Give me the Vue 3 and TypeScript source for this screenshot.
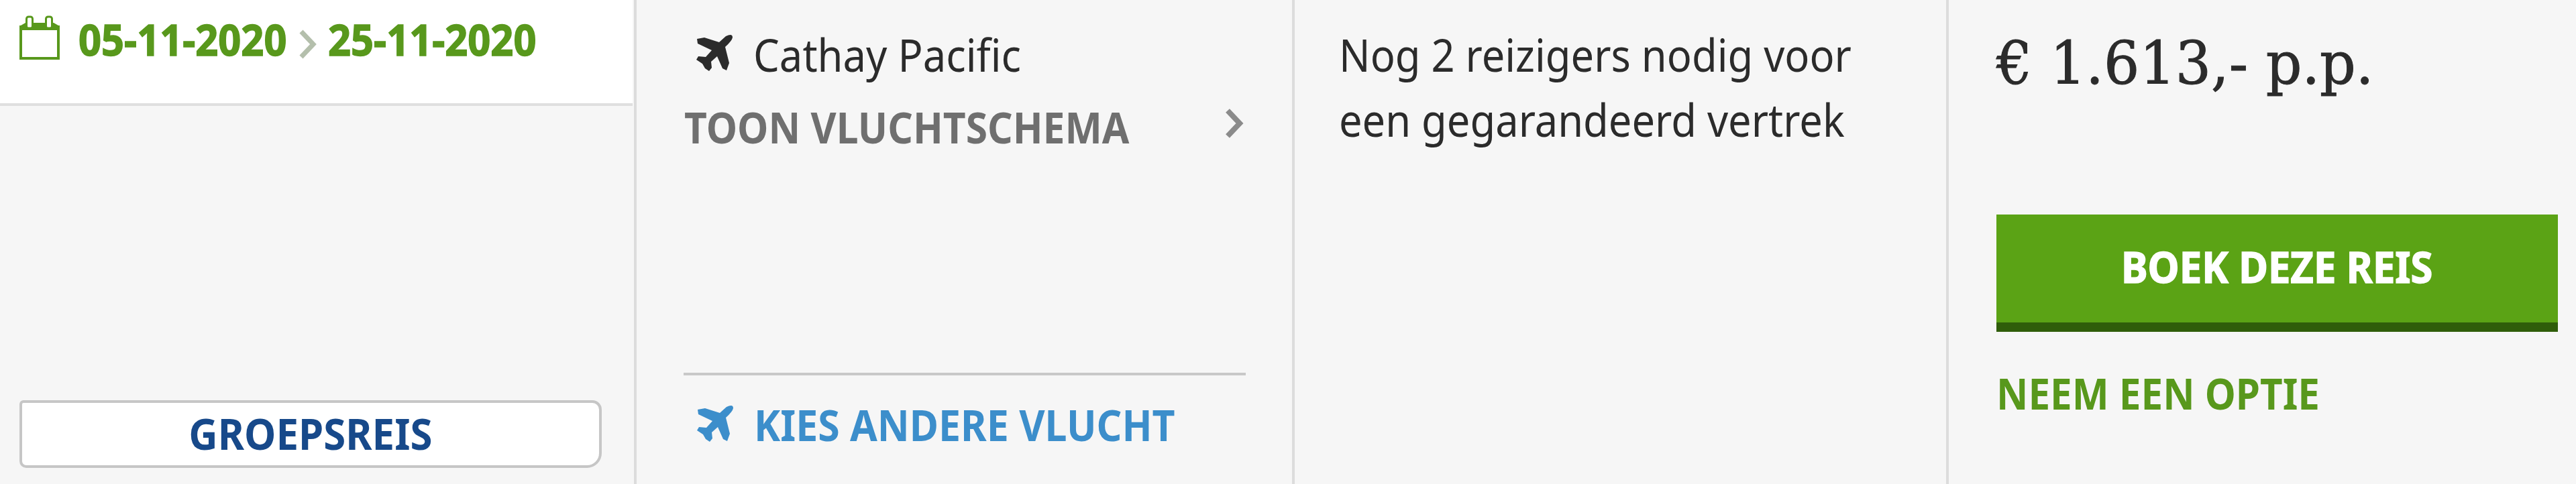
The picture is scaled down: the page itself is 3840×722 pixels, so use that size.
<script setup lang="ts">
const trip = {
  start: '05-11-2020',
  end: '25-11-2020',
  type: 'GROEPSREIS',
  airline: 'Cathay Pacific',
  price: '€ 1.613,- p.p.',
}
const planePath =
  'M1 6 L12 4 L34 11 L44 2 Q54 -3 54 4 Q53 9 43 18 L49 42 L45 53 L39 50 L31 32 L22 40 L23 49 L19 54 L13 50 L9 43 L0 37 L3 32 L14 33 L23 23 L2 13 Z'
</script>

<template>
  <main class="trip">
    <section class="col dates">
      <header class="period">
        <svg class="calendar" viewBox="0 0 60 66" aria-hidden="true">
          <path d="M2 22V15L9 11H51L58 15V22Z" fill="currentColor" />
          <path d="M2 15V64H58V15" fill="none" stroke="currentColor" stroke-width="4" />
          <rect x="10.5" y="2" width="9" height="17" rx="3" fill="#fff" stroke="currentColor" stroke-width="3" />
          <rect x="39.5" y="2" width="9" height="17" rx="3" fill="#fff" stroke="currentColor" stroke-width="3" />
        </svg>
        <time class="date">{{ trip.start }}</time>
        <svg class="until" viewBox="0 0 28 42" aria-hidden="true">
          <path d="M4 2L22 21L4 40" />
        </svg>
        <time class="date">{{ trip.end }}</time>
      </header>
      <div class="tag"><span class="fit">{{ trip.type }}</span></div>
    </section>

    <section class="col flight">
      <div class="airline">
        <svg class="plane" viewBox="0 0 54 55" aria-hidden="true"><path :d="planePath" /></svg>
        <span class="fit">{{ trip.airline }}</span>
      </div>
      <a class="schedule">
        <span class="fit">TOON VLUCHTSCHEMA</span>
        <svg class="more" viewBox="0 0 28 44" aria-hidden="true"><path d="M4 3L22 22L4 41" /></svg>
      </a>
      <a class="other">
        <svg class="plane" viewBox="0 0 54 55" aria-hidden="true"><path :d="planePath" /></svg>
        <span class="fit">KIES ANDERE VLUCHT</span>
      </a>
    </section>

    <section class="col status">
      <p class="notice">Nog 2 reizigers nodig voor<br />een gegarandeerd vertrek</p>
    </section>

    <section class="col booking">
      <div class="price">{{ trip.price }}</div>
      <button class="book" type="button"><span class="fit">BOEK DEZE REIS</span></button>
      <a class="option">NEEM EEN OPTIE</a>
    </section>
  </main>
</template>

<style>
body {
  background: #f6f6f6;
}
</style>

<style scoped>
.trip {
  display: grid;
  grid-template-columns: 949px 981px 975px 935px;
  width: 3840px;
  height: 722px;
  overflow: hidden;
  box-sizing: border-box;
  background: #f6f6f6;
  color: #2b2b2b;
  font-family: 'Noto Sans', 'Open Sans', sans-serif;
  font-size: 64px;
  white-space: nowrap;
}
.col {
  display: flex;
  flex-direction: column;
  box-sizing: border-box;
  min-width: 0;
  border-right: 4px solid #dcdcdc;
}
.fit,
.date {
  display: inline-block;
  transform-origin: 0 50%;
}
svg {
  display: block;
  flex: none;
  overflow: visible;
}

.dates {
  justify-content: space-between;
}
.period {
  display: flex;
  align-items: flex-start;
  box-sizing: border-box;
  width: 943px;
  height: 158px;
  padding-left: 29px;
  background: #fff;
  border-bottom: 4px solid #dfdfdf;
  color: #58981c;
  font-weight: 700;
  line-height: 117px;
}
.calendar {
  width: 60px;
  height: 66px;
  margin: 23px 28px 0 0;
}
.date {
  width: 328px;
  transform: scaleX(0.93);
  -webkit-text-stroke: 1.5px currentColor;
}
.until {
  width: 28px;
  height: 42px;
  margin: 45px 16px 0 0;
}
.until path {
  fill: none;
  stroke: #b4bfac;
  stroke-width: 7;
}
.tag {
  display: flex;
  justify-content: center;
  box-sizing: border-box;
  width: 868px;
  height: 101px;
  margin: 0 0 24px 29px;
  border: 4px solid #c6c6c6;
  border-radius: 6px 14px 22px 10px;
  background: #fff;
  color: #17498a;
  font-weight: 700;
  line-height: 91px;
}
.tag .fit {
  transform-origin: 50% 50%;
  transform: scaleX(0.937);
}

.flight {
  padding: 32px 69px 0 70px;
}
.airline,
.schedule,
.other {
  display: flex;
}
.airline {
  height: 98px;
  padding-left: 19px;
  font-size: 67px;
  line-height: 99px;
}
.plane {
  width: 54px;
  height: 55px;
  fill: currentColor;
}
.airline .plane {
  margin: 20px 31px 0 0;
}
.airline .fit {
  transform: scaleX(0.918);
}
.schedule {
  justify-content: space-between;
  height: 116px;
  padding-left: 1px;
  color: #6f6f6f;
  font-weight: 700;
  line-height: 119px;
}
.schedule .fit {
  transform: scaleX(0.917);
}
.more {
  width: 28px;
  height: 44px;
  margin: 32px 3px 0 0;
}
.more path {
  fill: none;
  stroke: #8b8b8b;
  stroke-width: 8;
}
.other {
  height: 144px;
  margin-top: auto;
  margin-bottom: 18px;
  padding-left: 20px;
  border-top: 4px solid #c8c8c8;
  color: #3c8ecb;
  font-weight: 700;
  line-height: 147px;
}
.other .plane {
  margin: 45px 31px 0 0;
}
.other .fit {
  transform: scaleX(0.922);
}

.status {
  padding: 33px 0 0 66px;
}
.notice {
  margin: 0;
  font-size: 67px;
  line-height: 97px;
  transform: scaleX(0.916);
  transform-origin: 0 0;
}

.booking {
  padding: 32px 27px 0 71px;
  border-right: 0;
}
.price {
  height: 126px;
  font-family: 'DejaVu Serif', serif;
  font-size: 88px;
  line-height: 126px;
  transform: scaleX(0.953);
  transform-origin: 0 0;
  -webkit-text-stroke: 1px currentColor;
}
.book {
  display: flex;
  justify-content: center;
  box-sizing: border-box;
  height: 175px;
  margin: 162px 0 0;
  padding: 0;
  border: 0;
  border-bottom: 14px solid #2f5d0a;
  background: #5ba315;
  color: #fff;
  font: inherit;
  font-weight: 700;
  line-height: 155px;
}
.book .fit {
  transform-origin: 50% 50%;
  transform: scaleX(0.932);
  -webkit-text-stroke: 1.5px currentColor;
}
.option {
  color: #58981c;
  font-weight: 700;
  line-height: 184px;
  transform: scaleX(0.911);
  transform-origin: 0 50%;
}
</style>
